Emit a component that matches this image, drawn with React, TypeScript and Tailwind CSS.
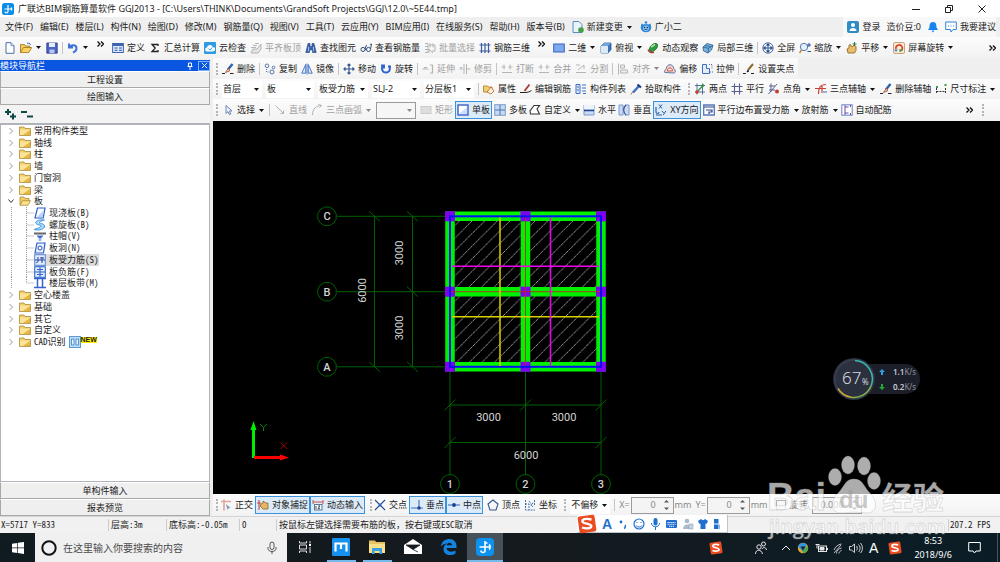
import React from "react";
import clsx from "clsx";

const B = "#3f6fc4";
const G = "#b4b4b4";

const icons: Record<string, React.ReactNode> = {
  app: <><rect width="12" height="12" rx="2.5" fill="#0a8ce8" /><path d="M6 2v6.500a1.500 1.500 0 0 1-3 0M2.500 6h7M9 4.500c1 .8 1 2.200 0 3" stroke="#fff" strokeWidth="1.200" fill="none" /></>,
  fresh: <><path d="M2 .7h5l3 3v7.600H2z" fill="#fff" stroke="#4a6ea8" /><path d="M7 .7v3h3" fill="#cfe0f5" stroke="#4a6ea8" strokeWidth=".7" /></>,
  open: <><path d="M.5 10.500v-8h4l1 1.500h4v2" fill="#f5c95a" stroke="#9b7420" strokeWidth=".8" /><path d="M.5 10.500l3-5h8.300l-3 5z" fill="#ffd25e" stroke="#9b7420" strokeWidth=".8" /><path d="M7 1.500c2-1 3 0 3.500 1.500" stroke="#2b5fb8" fill="none" /></>,
  save: <><path d="M.8 1h10.400v10.200H.8z" fill="#4b63c8" stroke="#26357f" strokeWidth=".8" /><path d="M3 1h6v4H3z" fill="#e5ecfa" /><path d="M3.500 7.500h5v3.700h-5z" fill="#b9c5ec" /></>,
  undo: <path d="M2 1.500v4h4M2.500 5.200C5 2 9.500 3 9.500 6.300c0 2-1.500 3.500-3.500 4.200" stroke="#3d73d8" strokeWidth="2" fill="none" />,
  define: <><rect x=".6" y="1.500" width="10.800" height="9" fill="#dce8fb" stroke="#3f66ad" /><path d="M1 3h10" stroke="#3f66ad" strokeWidth="2" /><path d="M2.500 6h3M2.500 8.300h3M7 6h3M7 8.300h3" stroke="#2f58a8" /></>,
  sigma: <path d="M9 4V2.500H3l3.200 3.600L3 9.500h6V8" stroke="#222" strokeWidth="1.300" fill="none" />,
  cloud: <><rect width="12" height="12" rx="1" fill="#2d9be6" /><path d="M3.300 9.500a2 2 0 0 1-.3-4 3 3 0 0 1 5.800-.6 2.300 2.300 0 0 1 .2 4.600z" fill="#fff" /><path d="M4.300 6.600l1.500 1.500 2.500-2.700" stroke="#2d9be6" fill="none" /></>,
  align: <path d="M1 11l2-4h4l4-5v5l-3 4zM1 5.500h5M3 3.500h4M5 1.500h4" stroke={G} fill="#e4e4e4" />,
  find: <><path d="M3 1.500h2v3h2v-3h2l2.200 9H7.500V8h-3v2.500H.8z" fill="#3b66b0" stroke="#21407d" strokeWidth=".6" /><path d="M3.500 5v4M8.500 5v4" stroke="#9fc0f0" /></>,
  glasses: <path d="M3 9.500A2 2 0 1 1 3 5.400a2 2 0 0 1 0 4.100zM8.500 9.500a2 2 0 1 1 0-4.100 2 2 0 0 1 0 4.100zM5 7.500h1.500M10.500 7l1-5-1.500.5M5 7l1.500-4" stroke="#34507a" fill="none" />,
  batch: <path d="M1 1.500h3v9H1M6 1.500v4M9 1.500v4M5 3h6v6H8M5 7l4 4M5 7v4M1 4.500h3M1 7.500h3" stroke={G} fill="none" />,
  rebar3: <path d="M.5 3h11M.5 9h11M2.500 1v10M6 1v10M9.500 1v10" stroke="#3d5c9f" strokeWidth="1.200" fill="none" />,
  two: <rect x=".7" y="2" width="10.600" height="8" fill="#7ea8f0" stroke="#3c63b8" />,
  cube: <><path d="M1 4l3.500-3H11v6.500L8 11H1z" fill="#3c74b8" stroke="#1e4a85" strokeWidth=".7" /><path d="M1 4h7v7H1z" fill="#d9e9f8" /><path d="M1 4l3.500-3H11L8 4z" fill="#6fa6dc" /></>,
  orbit: <><ellipse cx="6.500" cy="5.500" rx="5" ry="3" transform="rotate(-45 6.500 5.500)" fill="#2f9a3f" stroke="#145f24" strokeWidth=".7" /><path d="M4 5l4-2.500" stroke="#a5e8a0" strokeWidth="1.500" /><path d="M1 7.500c1 3 4 4 6 2.500" stroke="#b3372a" fill="none" strokeWidth="1.300" /></>,
  part: <><path d="M1 5l4-3.500 6 1.700L9.500 8l-3.500 3-4.500-2z" fill="#7bb4dc" stroke="#275d93" strokeWidth=".8" /><path d="M1 5l5.500 1.300L11 3.200M6.500 6.300L6 11M3 3.300l5.500 1.500" stroke="#275d93" strokeWidth=".8" fill="none" /></>,
  full: <><circle cx="6" cy="6" r="5.200" fill="#e8f0fb" stroke="#4c6fa8" /><path d="M6 2v8M2 6h8M6 1.500L4.700 3.200h2.600zM6 10.500L4.700 8.800h2.600zM1.500 6l1.700-1.300v2.600zM10.500 6L8.800 4.700v2.600z" stroke="#1f3f80" strokeWidth=".8" fill="#1f3f80" /></>,
  zoomi: <><circle cx="5" cy="5" r="3.700" fill="#e5effb" stroke="#5679ad" /><path d="M2.500 8l-2 3" stroke="#c08a3a" strokeWidth="1.500" /><path d="M10 1v4M8 3h4M8.500 9.500h3.500" stroke="#2d4f90" /></>,
  pan: <><path d="M2 11l-1-4 2-1V3l1.500-.5L6 5l2-2 2 1.500v4L8.500 11z" fill="#e9bd6a" stroke="#84601e" strokeWidth=".8" /><path d="M8.500 0v4M6.500 2h4" stroke="#2f7a33" /></>,
  spin: <><rect x=".5" y=".5" width="11" height="11" rx="1.500" fill="#fdebd8" stroke="#c9a27a" /><path d="M3 7a3.200 3.200 0 1 1 5 1.800" stroke="#d5402c" strokeWidth="1.600" fill="none" /><path d="M9.800 8L6.500 10.500 6.300 7z" fill="#3aa04a" /><path d="M1 7.500h4L3 10z" fill="#3d7fd5" /></>,
  erase: <><path d="M10.500 1L6 6.500" stroke="#2d5fb0" strokeWidth="2.400" /><path d="M6.500 5L3.500 9.500l4-1.500z" fill="#f0d8b0" stroke="#9a4a30" strokeWidth=".8" /><path d="M0 10.500h3M8 10.500h3.500" stroke="#222" /></>,
  copy: <><circle cx="3" cy="2.800" r="1.800" fill="none" stroke="#5878a5" /><circle cx="9.500" cy="4.500" r="1.300" fill="none" stroke="#5878a5" /><circle cx="8" cy="9" r="2" fill="none" stroke="#5878a5" /><path d="M2.500 6v3h2" stroke="#5878a5" fill="none" strokeDasharray="1 1" /></>,
  mirror: <path d="M4.700 1.500v8.700H.8zM7.300 1.500v8.700h3.900zM6 .5v11" stroke={B} fill="#dde8fa" strokeWidth=".9" />,
  move: <path d="M6 1v10M1 6h10M4.500 2.500L6 1l1.500 1.500M4.500 9.500L6 11l1.500-1.500M2.500 4.500L1 6l1.500 1.500M9.500 4.500L11 6 9.500 7.500" stroke="#35598f" strokeWidth="1.200" fill="none" />,
  rotate: <path d="M3 2.500C1 5 2 9.500 6 9.500s5-4.500 2.500-6.500M1 2.500h3v3M11 3.500H8" stroke="#2c63cf" strokeWidth="1.900" fill="none" />,
  extend: <path d="M.5 6h6M2 4.500h3M8 2h2.500v8H8" stroke={G} fill="none" strokeWidth="1.200" />,
  trim: <path d="M.5 6H4M8 6h3.500M5 1v10M7.500 1v10M1 4.500h2" stroke={G} fill="none" />,
  brk: <path d="M.5 4h4M7.500 4h4M1 9.500h10M3 1.500v5M9 1.500v5" stroke={G} fill="none" />,
  split: <path d="M1 2h4M1 9.500h10M3 7l6-5v4" stroke={G} fill="none" />,
  toalign: <path d="M1.500 .5v11M3.500 2h4v3h-4zM3.500 7h7v3h-7z" stroke={G} fill="#eee" />,
  offset: <><path d="M.8 9.500c-1-2 1-3 1.500-4 .5-5 7-5 7.500 0 2 1.500 2 4 .5 4.500z" fill="#f7d2cd" stroke="#5778a5" /><path d="M3.500 8c-.5-4 5-4 5-.2z" fill="#fff" stroke="#c84a3d" /></>,
  stretch: <><path d="M1.500 10.500v-9h4v4h3v5z" fill="#e4ecf8" stroke={B} /><path d="M8 1.500h3v4M9 9h3" stroke={B} strokeDasharray="1 1" fill="none" /></>,
  grippt: <><path d="M10 1L5 7" stroke="#8b6d2a" strokeWidth="2" /><path d="M5 7l-1 2 2-1" fill="#222" stroke="#222" /><path d="M0 10.500h3M8 10.500h3" stroke="#222" strokeWidth="1.200" /></>,
  props: <><path d="M.5 3h4l1 1H9v5H.5z" fill="#f2cf72" stroke="#a87b25" strokeWidth=".8" /><path d="M4 9l4-5 3 4-3 3z" fill="#fff2cf" stroke="#c25a2e" strokeWidth=".8" /></>,
  editbar: <><path d="M0 9.500h5c3 0 5-1 6.500-2" stroke="#222" fill="none" /><path d="M9.500 1.500L4.500 8" stroke="#a63a2b" strokeWidth="1.800" /></>,
  list: <><path d="M1 1.500h4v9H1zM7 2h4M7 5h4M7 8h4M8 10.500h3" stroke={B} fill="#dde8fa" /><path d="M2 4h2M2 7h2" stroke={B} /></>,
  pick: <><path d="M3 9.500L9 3" stroke="#3e72c2" strokeWidth="2.500" /><path d="M7.500 1.500l3.500 3" stroke="#1f3f7c" strokeWidth="2.200" /><path d="M1 11.500l1.500-2.500" stroke="#b5763a" /></>,
  twopt: <><path d="M1 2.500h10M1 9h10M3 .5v11M8.500 .5v11" stroke="#44618f" strokeWidth=".9" /><path d="M2.500 9.500L9 2.500" stroke="#2d9440" strokeWidth="1.300" /><circle cx="3" cy="9" r="1.700" fill="#d23a30" /><circle cx="9" cy="2.500" r="1.300" fill="#2d9440" /></>,
  parallel: <path d="M.5 3.500h11M.5 8.500h11M3.500 .5v11M8.500 .5v11" stroke="#5a5f93" strokeWidth="1.100" />,
  angle: <><path d="M1 3h6M3 .5v8M.5 11L9 1M1 7h6" stroke="#5a5f93" fill="none" /><circle cx="9" cy="8.500" r="2" fill="#c63939" /></>,
  arcaxis: <><path d="M11 1.500C5 1.500 3.500 5 3.500 11M0 5.500h11M7 3v7" stroke="#c8433a" fill="none" strokeWidth="1.200" /><path d="M8 9h4" stroke="#476bab" /></>,
  dim: <><path d="M1.500 5v6M10.500 5v6M1.500 8.500h9" stroke="#333" fill="none" strokeDasharray="2 1" /><rect x="1" y="3" width="2" height="2" fill="#3aa04a" /><rect x="9.500" y="1" width="2" height="2" fill="#3aa04a" /></>,
  cursor: <path d="M4 1.500v8l2-1.800 1.500 3 1.300-.7-1.400-2.800 2.600-.3z" fill="#eef3fb" stroke="#5b7bb0" strokeWidth=".9" />,
  line: <path d="M1.500 1.500l8 8M9.500 6.500v3h-3" stroke={G} fill="none" />,
  arc: <path d="M1.500 11C1.500 5 5 1.500 10.500 1.500M10.500 1.500l-3-1M10.500 1.500l-2 2" stroke={G} fill="none" />,
  rectg: <rect x="1" y="2.500" width="10" height="7" fill="#ddd" stroke="#ccc" />,
  slab: <><rect x="1" y="1" width="10" height="10" fill="#fff" stroke="#3a5fcb" strokeWidth="1.400" /><path d="M2 10h8V3z" fill="#cfdffb" /></>,
  slabs: <><rect x=".7" y=".7" width="10.600" height="10.600" fill="#c5daf4" stroke="#7c9dc9" /><path d="M6 1v10M1 6h10" stroke="#4c74ad" /></>,
  custom: <path d="M5 1.500h5.500L8 5l2.500 5H1.500L1 7z" fill="#fff" stroke="#333" strokeWidth="1.100" />,
  horiz: <><path d="M1 1v10h10V1" fill="#c9dbf6" stroke="#7c98cc" /><path d="M1 6.500h10" stroke="#26448c" strokeWidth="1.500" /><path d="M1 1h10v4H1z" fill="#eef4fd" /></>,
  vert: <><path d="M1 1h4v10H1zM7 1h4v10H7" fill="#c9dbf6" stroke="#7c98cc" /><path d="M8 1C5 3 5 9 8 11" stroke="#26448c" fill="none" strokeWidth="1.200" /></>,
  xy: <><path d="M1 3v5c0 2 3 2 3 0" stroke="#2a65b4" fill="none" strokeWidth="1.200" /><path d="M4 .5l3 4M7 .5l-3 4M7 7l1.700 2M10.800 7l-2.500 4M1 11h6" stroke="#1d4c94" strokeWidth=".9" /></>,
  para: <><path d="M.7 1h10.600v10H.7z" fill="#fff" stroke="#5a78b5" strokeWidth="1.300" /><path d="M1 3h10M3 6h6v2H6v2" stroke="#26448c" fill="none" strokeWidth="1.200" /></>,
  auto: <><rect x=".8" y=".8" width="10.400" height="10.400" fill="#fff" stroke="#6b83c5" /><path d="M4 1v10M7.500 3H4M7.500 9H4M9.500 1v2M9.500 9v2" stroke="#6b4fa0" fill="none" /></>,
  doc: <><path d="M1 .5h6l3 3v8H1z" fill="#e9f3fc" stroke="#5f8cc0" /><circle cx="9" cy="9" r="2.800" fill="#43a047" /></>,
  robot: <><path d="M1.500 2.500l2 1a6 5 0 0 1 5 0l2-1 .8 4a5.300 4.800 0 0 1-10.600 0z" fill="#2b86d6" /><circle cx="6" cy="7.300" r="2.800" fill="#8ac6f5" /><circle cx="4.700" cy="6.500" r=".7" fill="#102a50" /><circle cx="7.300" cy="6.500" r=".7" fill="#102a50" /><path d="M4.500 8.500h3" stroke="#102a50" strokeWidth=".7" /><circle cx="6" cy="1.500" r="1.300" fill="#2b86d6" /></>,
  user: <><rect width="12" height="12" rx="2" fill="#2f8cc4" /><circle cx="6" cy="4" r="2" fill="#fff" /><path d="M2.500 10c0-4 7-4 7 0z" fill="#fff" /></>,
  bell: <path d="M6 1c3.500 0 3.500 3.500 3.500 5.500L11 9H1l1.500-2.500C2.500 4.500 2.500 1 6 1zM4.500 9.500h3L6 11.500z" fill="#1583f0" />,
  chat: <><path d="M.7 1h10.600v7.500H8L6 11 5.500 8.500H.7z" fill="#fff" stroke="#2e84dc" /><path d="M3 5h1M5.500 5h1M8 5h1" stroke="#2e84dc" strokeWidth="1.200" /></>,
  ortho: <><path d="M1 2.500h10M4 .5v11" stroke="#e3a6a0" strokeWidth="1.700" /><path d="M6 5l4.500 4-2 .3L7.500 11z" fill="#7c93bb" /></>,
  snap: <><path d="M2 1v10M0 4h4" stroke="#c4473e" strokeWidth="1.100" /><path d="M4 5l2-1V2l3 2h2v6H6l-3-3z" fill="#e4b768" stroke="#8a6528" strokeWidth=".8" /></>,
  dyn: <><path d="M1 3h10M1 1v4M11 1v4" stroke="#c5544c" /><rect x="2.500" y="5.500" width="7.500" height="5.500" fill="#fff" stroke="#56779d" /><path d="M4 7v3M6 7h2L6 9.700h2" stroke="#222" strokeWidth=".8" fill="none" /></>,
  cross: <><path d="M1 1l10 10M11 1L1 11" stroke="#24498f" strokeWidth="1.100" /><circle cx="6" cy="6" r="1.500" fill="#2e64c4" /></>,
  perp: <><path d="M0 9h12M8 1v8" stroke="#3f70bb" strokeWidth="1.100" /><circle cx="8" cy="9" r="1.700" fill="#1c3f8f" /></>,
  mid: <><path d="M0 6h12" stroke="#3f70bb" strokeWidth="1.100" /><circle cx="6" cy="6" r="1.900" fill="#1c3f8f" /></>,
  penta: <path d="M6 1l5 4-2 6H3L1 5z" stroke="#34588f" fill="none" strokeWidth="1.100" />,
  coord: <path d="M1.500 1v10H11M1 5h4v6M5 2l4 6M9 3.500L7 7M10.500 1v5" stroke="#3f6fab" fill="none" strokeDasharray="2 1" />,
  folder: <><path d="M.5 2h4.500l1 1.500h5.500v7H.5z" fill="#f3cd6a" stroke="#a07f2c" strokeWidth=".7" /><path d="M1 4.500h10V10H1z" fill="#fbe39a" /><path d="M11 5v5H4z" fill="#eab53c" /></>,
  folderOpen: <><path d="M1 10V2h4l1 1.500h4V6" fill="#f3cd6a" stroke="#a07f2c" strokeWidth=".7" /><path d="M1 10.300l2.500-4.600h8L9 10.300z" fill="#ffe08a" stroke="#a4812a" strokeWidth=".7" /></>,
  tSlab: <><path d="M3.500 1h7.500l-1.800 10H1z" fill="#fff" stroke="#2a5fc8" strokeWidth="1.200" /><path d="M10 3L8.500 10H3z" fill="#b9d3fa" /></>,
  tSpiral: <><path d="M10.500 1C5 0 .5 2.500 2 4.500S7 5.500 7 7 3.500 9 0 10.500C5 12 11 10 10.500 7S6 5 5.500 4s2-2 5-3z" fill="#a9dcf8" stroke="#3a8bd8" strokeWidth=".9" /></>,
  tCap: <><rect x="0" y="2.500" width="12" height="2" fill="#666" /><path d="M2.500 5.500h7L7.500 8h-3z" fill="#4b6fd0" /><rect x="4.700" y="8" width="2.600" height="3" fill="#8fb0ee" /></>,
  tHole: <><path d="M3 1h8L9.500 11H1z" fill="#eaf2fd" stroke="#2a5fc8" strokeWidth="1.200" /><circle cx="6" cy="6" r="2" fill="#fff" stroke="#2a4fb5" /></>,
  tBar: <><rect x=".7" y=".7" width="10.600" height="10.600" fill="#e2ecfb" stroke="#5f83cf" /><path d="M1 6h10M4 3v4c0 2-2 2-2 1M8 3v6M6 4h4" stroke="#24479f" fill="none" /></>,
  tNeg: <><rect x=".7" y=".7" width="10.600" height="10.600" fill="#e2ecfb" stroke="#2a5fc8" /><path d="M1 6h10M6 1v10M3 3.500h6M3 8.500h6" stroke="#2a5fc8" fill="none" /></>,
  tBand: <path d="M0 1.500h12M0 10.500h12M3.500 1.500v9M8.500 1.500v9" stroke="#3465cc" strokeWidth="1.500" />,
  cad: <><rect x=".5" y=".5" width="11" height="11" fill="#b9dcf8" stroke="#5c9ad0" /><path d="M2.500 3h2.500v6H2.500zM7 3h2.500v6H7z" fill="#e9f5fe" stroke="#3b7fc0" strokeWidth=".8" /></>,
};

function Icon({ name }: { name: string }) {
  return <svg viewBox="0 0 12 12" className="size-3 shrink-0" aria-hidden="true">{icons[name]}</svg>;
}

function Caret({ dim }: { dim?: boolean }) {
  return <svg viewBox="0 0 5 3" className="mx-px h-[3px] w-[5px] shrink-0" aria-hidden="true"><path d="M0 0h5L2.500 3z" fill={dim ? "#888" : "#111"} /></svg>;
}

type ToolProps = { icon?: string; label?: string; title?: string; off?: boolean; on?: boolean; caret?: boolean };

function Tool({ icon, label, title, off, on, caret }: ToolProps) {
  return (
    <button
      type="button"
      aria-label={label ? undefined : title}
      aria-pressed={on}
      className={clsx(
        "flex shrink-0 items-center gap-[3px] whitespace-nowrap",
        off && "text-[#a0a0a0]",
        on && "h-[18px] border border-[#3c92d8] bg-[#dcebf9] px-px",
      )}
    >
      {icon && <Icon name={icon} />}
      {label}
      {caret && <Caret dim={off} />}
    </button>
  );
}

const Sep = () => <span className="h-3 w-px shrink-0 bg-[#c4c4c4]" />;
const Grip = () => <span className="ml-[3px] h-3 shrink-0 border-l-2 border-dotted border-[#b5b5b5]" />;
const More = () => (
  <button type="button" aria-label="更多" className="mx-1 -mt-2 shrink-0">
    <svg viewBox="0 0 7 6" className="h-1.5 w-[7px]" aria-hidden="true"><path d="M.5.5L3 3 .5 5.500M4 .5L6.500 3 4 5.500" stroke="#111" strokeWidth="1.300" fill="none" /></svg>
  </button>
);

function Combo({ label, value, width, boxed }: { label: string; value: string; width: string; boxed?: boolean }) {
  return (
    <span className={clsx("relative flex h-[17px] shrink-0 items-center", width, boxed ? "border border-[#9a9a9a] bg-[#f6f6f6]" : "bg-white")}>
      <select aria-label={label} className="w-full appearance-none bg-transparent pl-px outline-none">
        <option>{value}</option>
      </select>
      <span className="pointer-events-none absolute right-0.5 flex"><Caret dim={boxed} /></span>
    </span>
  );
}

function Spin({ label, value, width }: { label: string; value: string; width: string }) {
  return (
    <span className={clsx("flex h-[17px] shrink-0 items-center border border-[#9c9c9c] bg-[#f4f4f4] pr-1 text-[#8a8a8a]", width)}>
      <input aria-label={label} defaultValue={value} className="min-w-0 flex-1 bg-transparent pr-2 text-right outline-none" />
      <svg viewBox="0 0 5 12" className="h-3 w-[5px]" aria-hidden="true"><path d="M0 3.500h5L2.500 1zM0 8.500h5L2.500 11z" fill="#555" /></svg>
    </span>
  );
}

const menus = ["文件(F)", "编辑(E)", "楼层(L)", "构件(N)", "绘图(D)", "修改(M)", "钢筋量(Q)", "视图(V)", "工具(T)", "云应用(Y)", "BIM应用(I)", "在线服务(S)", "帮助(H)", "版本号(B)"];

type Node = { label: string; icon?: string; child?: boolean; open?: boolean; selected?: boolean; isNew?: boolean; last?: boolean };
const tree: Node[] = [
  { label: "常用构件类型" }, { label: "轴线" }, { label: "柱" }, { label: "墙" }, { label: "门窗洞" }, { label: "梁" },
  { label: "板", open: true },
  { label: "现浇板(B)", icon: "tSlab", child: true },
  { label: "螺旋板(B)", icon: "tSpiral", child: true },
  { label: "柱帽(V)", icon: "tCap", child: true },
  { label: "板洞(N)", icon: "tHole", child: true },
  { label: "板受力筋(S)", icon: "tBar", child: true, selected: true },
  { label: "板负筋(F)", icon: "tNeg", child: true },
  { label: "楼层板带(M)", icon: "tBand", child: true, last: true },
  { label: "空心楼盖" }, { label: "基础" }, { label: "其它" }, { label: "自定义" }, { label: "CAD识别", isNew: true },
];

const mono = "font-['Noto_Sans_Mono_CJK_SC','Noto_Sans_CJK_SC','Liberation_Mono',monospace]";

function TreeRow({ node }: { node: Node }) {
  return (
    <li className="flex min-h-0 flex-1 items-center">
      {node.child ? (
        <svg viewBox="0 0 30 12" className="h-3 w-[30px] shrink-0" aria-hidden="true">
          <path d={node.last ? "M7.500 0v12M22.500 0v6h8" : "M7.500 0v12M22.500 0v12M22.500 6h8"} stroke="#999" strokeDasharray="1 1" fill="none" />
        </svg>
      ) : (
        <svg viewBox="0 0 15 12" className="h-3 w-[15px] shrink-0" aria-hidden="true">
          <path d={node.open ? "M4.500 4.500l2.500 3 2.500-3" : "M5.500 3L8.500 6 5.500 9"} stroke={node.open ? "#333" : "#999"} fill="none" />
        </svg>
      )}
      <button type="button" className={clsx("flex items-center gap-[3px] whitespace-nowrap", node.selected && "bg-[#dcdcdc]")}>
        <Icon name={node.icon ?? (node.open ? "folderOpen" : "folder")} />
        {node.label}
        {node.isNew && <><Icon name="cad" /><span className="-ml-[3px] -mt-1 bg-[#fff200] font-['Liberation_Sans',sans-serif] text-[7px] leading-[6px] font-bold">NEW</span></>}
      </button>
    </li>
  );
}

function PanelButton({ children }: { children: string }) {
  return <button type="button" className="h-[17px] shrink-0 border border-t-white border-r-[#a8a8a8] border-b-[#a8a8a8] border-l-[#a8a8a8] bg-[#efefef] text-center">{children}</button>;
}

function Sidebar() {
  return (
    <aside className={clsx("flex w-[210px] shrink-0 flex-col pt-0.5", mono)}>
      <header className="flex h-[11px] items-center bg-[#0a56e0] leading-[11px] text-white">
        <h2 className="flex-1">模块导航栏</h2>
        <button type="button" aria-label="固定" className="mr-1"><svg viewBox="0 0 8 8" className="size-2"><path d="M2.500 1h3v3.500h-3zM1.500 4.500h5M4 4.500V8" stroke="#fff" fill="none" /></svg></button>
        <button type="button" aria-label="关闭" className="flex h-[10px] w-3 items-center justify-center border border-[#7fb0ff]"><svg viewBox="0 0 8 8" className="size-[7px]"><path d="M1 1l6 6M7 1L1 7" stroke="#fff" /></svg></button>
      </header>
      <PanelButton>工程设置</PanelButton>
      <PanelButton>绘图输入</PanelButton>
      <div className="flex h-[18px] shrink-0 items-center gap-1 bg-[#f3f3f3] pl-1">
        <button type="button" aria-label="全部展开"><svg viewBox="0 0 13 12" className="h-3 w-[13px]"><path d="M1 4h6M4 1v6M6 8.500h6M9 5.500v6" stroke="#0c4a44" strokeWidth="2" /></svg></button>
        <button type="button" aria-label="全部折叠"><svg viewBox="0 0 13 12" className="h-3 w-[13px]"><path d="M0 4h6M6 8.500h6" stroke="#0c4a44" strokeWidth="2" /></svg></button>
      </div>
      <div className="min-h-0 flex-1 overflow-hidden border-x border-t-2 border-b border-[#b0b4ba] bg-white pl-[3px]">
        <ul className="flex h-[223px] flex-col">{tree.map((n) => <TreeRow key={n.label} node={n} />)}</ul>
      </div>
      <PanelButton>单构件输入</PanelButton>
      <PanelButton>报表预览</PanelButton>
    </aside>
  );
}

const bubble = (cx: number, cy: number) =>
  Array.from({ length: 12 }, (_, i) => {
    const a = (Math.PI * (2 * i + 1)) / 12;
    return `${(cx + 9.5 * Math.cos(a)).toFixed(1)},${(cy + 9.5 * Math.sin(a)).toFixed(1)}`;
  }).join(" ");

const xs = [450, 525.5, 601];
const ys = [216.3, 291.7, 366.8];

function Drawing() {
  return (
    <svg viewBox="213 121 787 373" preserveAspectRatio="xMinYMin meet" className="h-full w-full" role="img" aria-label="板受力筋平面图">
      <defs>
        <pattern id="hatch" width="12.6" height="12.6" patternUnits="userSpaceOnUse">
          <path d="M-1 13.600L13.600 -1" stroke="#a8a8a8" strokeWidth=".9" strokeDasharray="3 .6" />
        </pattern>
      </defs>
      <rect x="454" y="220" width="143" height="143" fill="url(#hatch)" />
      <g stroke="#006000" fill="none">
        {ys.map((y) => <path key={y} d={`M337 ${y}H450`} />)}
        <path d="M374.500 216V367M412.500 216V367M450 405H601M450 442.500H601" />
        {xs.map((x) => <path key={x} d={`M${x} 372V475`} />)}
        {[[374.5, 0], [374.5, 2], [412.5, 0], [412.5, 1], [412.5, 2]].map(([x, i]) => <path key={`${x}${i}`} d={`M${x - 5.5} ${ys[i] - 5}l11 10`} />)}
        {[[450, 405], [525.5, 405], [601, 405], [450, 442.5], [601, 442.5]].map(([x, y]) => <path key={`${x}${y}`} d={`M${x - 5.5} ${y + 5.5}l11 -11`} />)}
        {ys.map((y) => <polygon key={y} points={bubble(327, y)} />)}
        {xs.map((x) => <polygon key={x} points={bubble(x, 484)} />)}
      </g>
      <path d="M450 216.300H601V366.800H450zM525.500 216V367M450 291.700H601" stroke="#00f000" strokeWidth="9.500" fill="none" />
      <g fill="#8000f0">
        {ys.flatMap((y) => xs.map((x) => <rect key={`${x}-${y}`} x={x - 5} y={y - 5} width="10" height="10" />))}
      </g>
      <path d="M525.500 217V367M450 291.700H601" stroke="#b03010" strokeWidth=".9" />
      <rect x="450" y="216.300" width="151" height="150.500" fill="none" stroke="#0010f0" strokeWidth="2" />
      <path d="M500 217.500V366M452 316.700H599" stroke="#d8d000" strokeWidth="1.500" />
      <path d="M550.500 217.500V366M452 266.300H599" stroke="#f000f0" strokeWidth="1.500" />
      <g fill="#d4d4d4" fontSize="11" textAnchor="middle" fontFamily="Roboto, sans-serif">
        {["C", "B", "A"].map((t, i) => <text key={t} x="327" y={ys[i] + 4} fontWeight="500">{t}</text>)}
        {["1", "2", "3"].map((t, i) => <text key={t} x={xs[i]} y="488" fontWeight="500">{t}</text>)}
        <text x="488.500" y="421">3000</text>
        <text x="564" y="421">3000</text>
        <text x="526" y="459">6000</text>
        <text transform="translate(403 253) rotate(-90)">3000</text>
        <text transform="translate(403 328) rotate(-90)">3000</text>
        <text transform="translate(366 290.500) rotate(-90)">6000</text>
      </g>
      <path d="M253.500 458V430" stroke="#00ee00" strokeWidth="3" />
      <path d="M250.500 430l3-9 3 9z" fill="#00ee00" />
      <path d="M254 457.500h27" stroke="#f00" strokeWidth="3" />
      <path d="M280 454.500l9 3-9 3z" fill="#f00" />
      <path d="M260 424l3.500 3.500L267 424M263.500 427.500v3.500" stroke="#008a00" fill="none" />
      <path d="M280.500 442.500l6.500 6.500M287 442.500l-6.500 6.500" stroke="#a00000" />
    </svg>
  );
}

function Arrow({ down, color }: { down?: boolean; color: string }) {
  return <svg viewBox="0 0 6 6" className="size-1.5" aria-hidden="true"><path d={down ? "M3 6L0 3h2V0h2v3h2z" : "M3 0L0 3h2v3h2V3h2z"} fill={color} /></svg>;
}

function SpeedBall() {
  return (
    <div className="absolute top-[236px] right-20 flex items-center font-['Noto_Sans','Open_Sans',sans-serif]">
      <svg viewBox="0 0 42 44" className="z-10 h-[44px] w-[42px]" role="img" aria-label="67%">
        <circle cx="21" cy="22" r="21" fill="#2b303e" />
        <circle cx="21" cy="22" r="19" fill="none" stroke="#363c4b" strokeWidth="2" />
        <path d="M22 3.500A18.500 18.500 0 0 1 38 29" fill="none" stroke="#38b8b0" strokeWidth="1.500" />
        <path d="M38 29A18.500 18.500 0 0 1 18 40.200" fill="none" stroke="#86b44c" strokeWidth="1.500" />
        <path d="M18 40.200A18.500 18.500 0 0 1 5 31.500" fill="none" stroke="#c8a838" strokeWidth="1.500" />
        <text x="9" y="27" fontSize="17" fontWeight="300" fill="#d5d8de">67</text>
        <text x="29" y="28" fontSize="8" fill="#d5d8de">%</text>
      </svg>
      <div className="-ml-4 w-[61px] rounded-r-full bg-[#1c1f2a] pl-5 text-[8px] leading-[15px] text-[#8d919b]">
        <p className="flex items-center gap-2"><Arrow color="#2f9fe0" /><span><b className="font-semibold text-[#c5c8d0]">1.1</b>K/s</span></p>
        <p className="flex items-center gap-2"><Arrow down color="#22a83a" /><span><b className="font-semibold text-[#c5c8d0]">0.2</b>K/s</span></p>
      </div>
    </div>
  );
}

function Sogou({ className }: { className: string }) {
  return (
    <svg viewBox="0 0 20 20" className={className} aria-hidden="true">
      <rect x="1.500" y="1.500" width="17" height="17" rx="2" fill="#ea4c22" transform="rotate(-8 10 10)" />
      <path d="M14.500 5.500C8 4 5 5.500 5.500 7.700S14 9.500 14.300 12 9 15 5 13.500" stroke="#fff" strokeWidth="2.400" fill="none" />
    </svg>
  );
}

function ImeBar() {
  return (
    <div className="absolute top-[-2px] left-[577px] flex h-[18px] w-[151px] items-center gap-[5px] border-r border-b border-[#bcc4cc] bg-white text-[#1e6fd0]">
      <Sogou className="-my-1 size-5 shrink-0" />
      <span className="font-['Liberation_Sans',sans-serif] text-[14px] font-bold">A</span>
      <svg viewBox="0 0 103 12" className="h-3 w-[103px] shrink-0" aria-hidden="true">
        <circle cx="4" cy="4" r="1.400" fill="#1e6fd0" /><path d="M8 7c1 1 0 3-1 3.500" stroke="#1e6fd0" strokeWidth="1.500" fill="none" />
        <circle cx="22" cy="6" r="5" fill="none" stroke="#1e6fd0" strokeWidth="1.200" /><path d="M20 4v1M24 4v1M19 7.500c1 2 5 2 6 0" stroke="#1e6fd0" fill="none" />
        <rect x="36.500" y="0" width="4" height="7.500" rx="2" fill="#1e6fd0" /><path d="M34.500 5c0 5 8 5 8 0M38.500 9v3" stroke="#1e6fd0" fill="none" />
        <rect x="49" y="2" width="11" height="8" rx="1" fill="#1e6fd0" /><path d="M50.500 4.500h8M50.500 6.300h8M52 8.300h5" stroke="#fff" strokeDasharray="1.200 .7" />
        <circle cx="70" cy="3" r="2.300" fill="#a9b9cc" /><path d="M66 11c0-6 8-6 8 0z" fill="#a9b9cc" /><rect x="72" y="6" width="4" height="5" fill="#c9d3de" stroke="#8fa3ba" strokeWidth=".6" />
        <path d="M81 3l3-2c1 1.500 3 1.500 4 0l3 2-1.500 3-1-.5V11h-5V5.500l-1 .5z" fill="#1e6fd0" />
        <path d="M97 1h4.500v4.500H97zM97 6.500h4.500V11H97zM102.500 6.500h.5V11h-.5z" fill="#1e6fd0" />
      </svg>
    </div>
  );
}

function Watermark() {
  return (
    <svg viewBox="0 0 190 90" className="pointer-events-none absolute right-[48px] bottom-[17px] h-[90px] w-[190px]" role="img" aria-label="Baidu 经验">
      <g fill="#fff" fillOpacity=".68" stroke="#999" strokeOpacity=".35" strokeWidth=".8">
        <ellipse cx="73" cy="22" rx="6.500" ry="8.500" />
        <ellipse cx="86" cy="10" rx="6.500" ry="9" />
        <ellipse cx="102" cy="11" rx="6.500" ry="9" />
        <ellipse cx="112" cy="26" rx="6.500" ry="8.500" />
        <path d="M92 24c9 0 10 8 15 13 10 9 8 21-2 21-6 0-9-1-13-1s-7 1-13 1c-10 0-12-12-2-21 5-5 6-13 15-13z" />
        <text x="5" y="55" fontSize="38" fontWeight="700" fontFamily="Liberation Sans, sans-serif">Bai</text>
        <text x="120" y="54" fontSize="31" fontWeight="700" fontFamily="Noto Sans CJK SC, sans-serif">经验</text>
        <text x="7" y="79" fontSize="20" fontWeight="600" fontFamily="Open Sans, sans-serif">jingyan.baidu.com</text>
      </g>
      <text x="77" y="53" fontSize="24" fontWeight="700" fill="#9a9a9a" fillOpacity=".55" fontFamily="Liberation Sans, sans-serif">du</text>
    </svg>
  );
}

function TaskApp({ label, active, running, children }: { label: string; active?: boolean; running?: boolean; children: React.ReactNode }) {
  return (
    <button type="button" aria-label={label} className={clsx("flex h-full w-9 items-center justify-center", active && "bg-[#46515a]")}>
      <span className={clsx("flex h-full items-center justify-center border-b-2", active ? "w-full" : "w-[29px]", running ? "border-[#76b9ed]" : "border-transparent")}>
        <svg viewBox="0 0 18 18" className="size-[18px]" aria-hidden="true">{children}</svg>
      </span>
    </button>
  );
}

function Taskbar() {
  return (
    <footer className="flex h-[29px] shrink-0 items-center bg-linear-to-r from-[#101b20] via-[#151a1e] to-[#0a1d26] font-['Noto_Sans','Noto_Sans_CJK_SC',sans-serif] text-white">
      <button type="button" aria-label="开始" className="flex h-full w-[35px] items-center justify-center">
        <svg viewBox="0 0 12 12" className="size-3"><path d="M0 1.700l5.300-.8v4.700H0zM6 .8L12 0v5.600H6zM0 6.300h5.300V11L0 10.300zM6 6.300h6V12l-6-.9z" fill="#fff" /></svg>
      </button>
      <label className="flex h-full w-[252px] items-center gap-1.5 bg-[#f0f0f0] pr-2.5 pl-1.5 text-[#444]">
        <svg viewBox="0 0 16 16" className="size-4"><circle cx="8" cy="8" r="6.700" fill="none" stroke="#111" strokeWidth="2" /></svg>
        <input aria-label="搜索" placeholder="在这里输入你要搜索的内容" className="min-w-0 flex-1 bg-transparent text-[10px] outline-none placeholder:text-[#4a4a4a]" />
        <svg viewBox="0 0 10 14" className="h-3.5 w-2.5"><rect x="3" y="1" width="4" height="7.500" rx="2" fill="none" stroke="#555" /><path d="M1 6v1.500c0 4 8 4 8 0V6M5 10.500V13" stroke="#555" fill="none" /></svg>
      </label>
      <TaskApp label="任务视图"><path d="M3.500 3v2h7V3M3.500 15v-2h7v2M3.500 7h7v4h-7zM14 3v2.500M14 9v6" stroke="#ddd" fill="none" /><rect x="13" y="6" width="2" height="2" fill="#fff" /></TaskApp>
      <TaskApp label="傲游" running><rect width="18" height="18" rx="1" fill="#1591f0" /><path d="M3.500 13.500v-8h11v8M9 11V6" stroke="#fff" strokeWidth="2.200" fill="none" /></TaskApp>
      <TaskApp label="文件资源管理器" running><path d="M1 2.500h6l1 1.500h9v11H1z" fill="#e8c262" /><path d="M1 6h16v9H1z" fill="#fbe08c" /><path d="M4 16v-6h10v6h-2.500v-3h-5v3z" fill="#3ba0e0" /></TaskApp>
      <TaskApp label="邮件"><path d="M0 7l9-6 9 6v9H0z" fill="#fff" /><path d="M2 7h14l-7 4.500zM9 11.500l5 2.500" fill="#141b1f" stroke="#141b1f" strokeWidth=".8" /></TaskApp>
      <TaskApp label="Edge"><path d="M1 9C1.500 3 5.500 1 9.500 1c4.500 0 7 3.500 7 7v2H6.500c.3 4 6 4.500 9 2.500v3C10 18.500 3.500 17 3.500 11c0-2.500 1.500-4.500 3.500-5.500C4.500 5.500 2 7 1 9zm5.700-1.700h5.300c0-3.300-5-3.500-5.300 0z" fill="#1583e0" /></TaskApp>
      <TaskApp label="广联达" active running><rect width="18" height="18" rx="4" fill="#0c92f0" /><path d="M9 3v9.500a2 2 0 0 1-4 0M3.500 9h11M9 5h2.500M13 6.500c1.500 1 1.500 4 0 5" stroke="#fff" strokeWidth="1.600" fill="none" /></TaskApp>
      <div className="ml-auto flex h-full items-center">
        <Sogou className="mr-8 size-3.5" />
        <svg viewBox="0 0 108 14" className="h-3.5 w-[108px]" fill="none" stroke="#e8e8e8" aria-hidden="true">
          <circle cx="4" cy="6" r="2.200" /><path d="M.5 13c0-5 6-5 7 0M7 8c1-2 4-2 4.500 1" /><circle cx="8.500" cy="3" r="2" />
          <path d="M27 9l4-4 4 4" />
          <circle cx="48" cy="7" r="5.200" fill="#e9a62a" stroke="none" /><path d="M43 5.500a5.200 5.200 0 0 1 9-1.500L48 11z" fill="#3296e0" stroke="none" /><path d="M48 12.200a5.200 5.200 0 0 0 4.800-7L48 9z" fill="#4aaa46" stroke="none" /><path d="M45.500 5.500h5L48 9.500z" fill="#222" stroke="none" />
          <rect x="63.500" y="5" width="8" height="5.500" /><path d="M65 6.500h4v2.500h-4z" fill="#e8e8e8" /><path d="M60.500 3.500h4M62 3.500v4M72.500 7v2" />
          <path d="M79 12l7-8M81.500 12.500c0-3 2-5 5-5.500M84 12.500c0-1.500 1-2.500 2.500-3M79 9c1-3 4-5.500 7.500-6" strokeWidth=".8" />
          <path d="M94.500 5.500h2l3-2.500v8.500l-3-2.500h-2zM101.500 5c1 1 1 3.500 0 4.500M103.500 3.500c2 2 2 5.500 0 7.500M105.500 2c2.500 3 2.500 7.500 0 10" strokeWidth=".9" />
        </svg>
        <span className="mr-2.5 ml-1.5 font-['Liberation_Sans',sans-serif] text-[14px]">A</span>
        <Sogou className="mr-3 size-3.5" />
        <time className="text-center text-[9px] leading-[14px]">8:53<br />2018/9/6</time>
        <button type="button" aria-label="通知" className="mx-4"><svg viewBox="0 0 13 13" className="size-[13px]"><path d="M.7 1.500h11.600v8.500H8L6.500 12 5 10H.7z" stroke="#fff" fill="none" /></svg></button>
        <span className="mr-0.5 h-full w-px bg-[#48545a]" />
      </div>
    </footer>
  );
}

const strip = "flex items-center bg-linear-to-b from-[#fcfcfc] to-[#f2f2f2]";

export default function App() {
  return (
    <div className="relative flex h-screen flex-col overflow-hidden bg-[#efefef] font-['Noto_Sans','Noto_Sans_CJK_SC',sans-serif] text-[9px] leading-3 text-[#1c1c1c]">
      <header className="flex h-[17px] shrink-0 items-center gap-1 bg-white pl-0.5">
        <Icon name="app" />
        <h1 className="flex-1 whitespace-nowrap">广联达BIM钢筋算量软件 GGJ2013 - [C:\Users\THINK\Documents\GrandSoft Projects\GGJ\12.0\~5E44.tmp]</h1>
        <div className="flex gap-[25px] pr-3.5">
          <button type="button" aria-label="最小化"><svg viewBox="0 0 8 8" className="size-2"><path d="M0 4.500h8" stroke="#222" /></svg></button>
          <button type="button" aria-label="还原"><svg viewBox="0 0 8 8" className="size-2"><path d="M.5 2.500h5v5h-5zM2.500 2.500v-2h5v5h-2" stroke="#222" fill="none" /></svg></button>
          <button type="button" aria-label="关闭"><svg viewBox="0 0 8 8" className="size-2"><path d="M.5.5l7 7M7.500.5l-7 7" stroke="#222" /></svg></button>
        </div>
      </header>
      <nav className="flex h-5 shrink-0 items-center gap-[7px] pr-1 pl-[5px] whitespace-nowrap">
        {menus.map((m) => <button key={m} type="button">{m}</button>)}
        <Tool icon="doc" label="新建变更" caret />
        <Tool icon="robot" label="广小二" />
        <div className="ml-auto flex h-full items-center gap-1.5 bg-[#f8f8f8] pl-1">
          <Tool icon="user" label="登录" />
          <span>造价豆:0</span>
          <Tool icon="bell" title="消息" />
          <Tool icon="chat" label="我要建议" />
        </div>
      </nav>
      <div className={clsx(strip, "h-[21px] shrink-0 gap-1 pl-1")} role="toolbar" aria-label="常用">
        <Tool icon="fresh" title="新建" />
        <Tool icon="open" title="打开" caret />
        <Tool icon="save" title="保存" />
        <Sep />
        <Tool icon="undo" title="撤销" caret />
        <More />
        <Tool icon="define" label="定义" />
        <Tool icon="sigma" label="汇总计算" />
        <Tool icon="cloud" label="云检查" />
        <Tool icon="align" label="平齐板顶" off />
        <Tool icon="find" label="查找图元" />
        <Tool icon="glasses" label="查看钢筋量" />
        <Tool icon="batch" label="批量选择" off />
        <Tool icon="rebar3" label="钢筋三维" />
        <More />
        <Tool icon="two" label="二维" caret />
        <Tool icon="cube" label="俯视" caret />
        <Tool icon="orbit" label="动态观察" />
        <Tool icon="part" label="局部三维" />
        <Sep />
        <Tool icon="full" label="全屏" />
        <Tool icon="zoomi" label="缩放" caret />
        <Tool icon="pan" label="平移" caret />
        <Tool icon="spin" label="屏幕旋转" caret />
        <span className="ml-auto"><More /></span>
      </div>
      <div className="flex min-h-0 flex-1 gap-[3px]">
        <Sidebar />
        <main className="flex min-w-0 flex-1 flex-col items-start">
          <div className={clsx(strip, "h-[21px] shrink-0 gap-1 pr-1")} role="toolbar" aria-label="修改">
            <Grip />
            <Tool icon="erase" label="删除" /><Sep />
            <Tool icon="copy" label="复制" />
            <Tool icon="mirror" label="镜像" /><Sep />
            <Tool icon="move" label="移动" />
            <Tool icon="rotate" label="旋转" /><Sep />
            <Tool icon="extend" label="延伸" off />
            <Tool icon="trim" label="修剪" off /><Sep />
            <Tool icon="brk" label="打断" off />
            <Tool icon="brk" label="合并" off />
            <Tool icon="split" label="分割" off /><Sep />
            <Tool icon="toalign" label="对齐" off caret />
            <Tool icon="offset" label="偏移" />
            <Tool icon="stretch" label="拉伸" /><Sep />
            <Tool icon="grippt" label="设置夹点" />
          </div>
          <div className={clsx(strip, "h-5 shrink-0 gap-1 pr-1")} role="toolbar" aria-label="构件">
            <Grip />
            <Combo label="楼层" value="首层" width="w-10" />
            <Combo label="构件类型" value="板" width="w-12" />
            <Combo label="构件" value="板受力筋" width="w-[50px]" />
            <Combo label="名称" value="SLJ-2" width="w-12" />
            <Combo label="分层" value="分层板1" width="w-[50px]" />
            <Sep />
            <Tool icon="props" label="属性" />
            <Tool icon="editbar" label="编辑钢筋" />
            <Tool icon="list" label="构件列表" />
            <Tool icon="pick" label="拾取构件" />
            <Grip />
            <Tool icon="twopt" label="两点" />
            <Tool icon="parallel" label="平行" />
            <Tool icon="angle" label="点角" caret />
            <Tool icon="arcaxis" label="三点辅轴" caret />
            <Tool icon="erase" label="删除辅轴" />
            <Tool icon="dim" label="尺寸标注" caret />
          </div>
          <div className={clsx(strip, "h-[22px] w-full shrink-0 gap-0.5 pr-4")} role="toolbar" aria-label="绘图">
            <div className="flex items-center gap-1">
              <Grip />
              <Tool icon="cursor" label="选择" caret /><Sep />
              <Tool icon="line" label="直线" off />
              <Tool icon="arc" label="三点画弧" off caret />
              <Combo label="偏移值" value="" width="w-10" boxed />
              <Tool icon="rectg" label="矩形" off />
            </div>
            <Tool icon="slab" label="单板" on />
            <Tool icon="slabs" label="多板" />
            <Tool icon="custom" label="自定义" caret />
            <Tool icon="horiz" label="水平" />
            <Tool icon="vert" label="垂直" />
            <Tool icon="xy" label="XY方向" on />
            <Tool icon="para" label="平行边布置受力筋" caret />
            <Tool label="放射筋" caret />
            <Tool icon="auto" label="自动配筋" />
            <span className="ml-auto"><More /></span>
            <Grip />
          </div>
          <section className="relative min-h-0 w-full flex-1 bg-black">
            <Drawing />
            <SpeedBall />
          </section>
          <div className={clsx(strip, "h-[22px] w-full shrink-0 gap-1")} role="toolbar" aria-label="捕捉">
            <div className="flex items-center gap-0.5">
              <Grip />
              <Tool icon="ortho" label="正交" />
              <div className="flex">
                <Tool icon="snap" label="对象捕捉" on />
                <Tool icon="dyn" label="动态输入" on />
              </div>
              <Grip />
              <Tool icon="cross" label="交点" />
              <div className="flex">
                <Tool icon="perp" label="垂点" on />
                <Tool icon="mid" label="中点" on />
              </div>
            </div>
            <Tool icon="penta" label="顶点" />
            <Tool icon="coord" label="坐标" />
            <Grip />
            <Combo label="偏移方式" value="不偏移" width="w-10" />
            <Sep />
            <span className="flex items-center gap-px text-[#888]">X=<Spin label="X" value="0" width="w-[43px]" />mm</span>
            <span className="flex items-center gap-px text-[#888]">Y=<Spin label="Y" value="0" width="w-[43px]" />mm</span>
            <label className="ml-1 flex items-center gap-1 text-[#777]"><input type="checkbox" className="size-2.5 appearance-none border border-[#b0b0b0]" />旋转</label>
            <Spin label="旋转角度" value="0.000" width="w-[50px]" />
          </div>
        </main>
      </div>
      <div className={clsx("relative flex h-[17px] shrink-0 items-center border-t border-[#d5d5d5] bg-[#f1f1f1] whitespace-nowrap", mono)}>
        <span className="w-[109px] border-r border-[#ccc] pl-px">X=5717 Y=833</span>
        <span className="w-[58px] border-r border-[#ccc] pl-0.5">层高:3m</span>
        <span className="w-[73px] border-r border-[#ccc] pl-0.5">底标高:-0.05m</span>
        <span className="w-[37px] border-r border-[#ccc] pl-0.5">0</span>
        <span className="flex-1 pl-0.5">按鼠标左键选择需要布筋的板，按右键或ESC取消</span>
        <span className="w-[52px] border-l border-[#ccc] pl-px">207.2 FPS</span>
        <ImeBar />
      </div>
      <Taskbar />
      <Watermark />
    </div>
  );
}
